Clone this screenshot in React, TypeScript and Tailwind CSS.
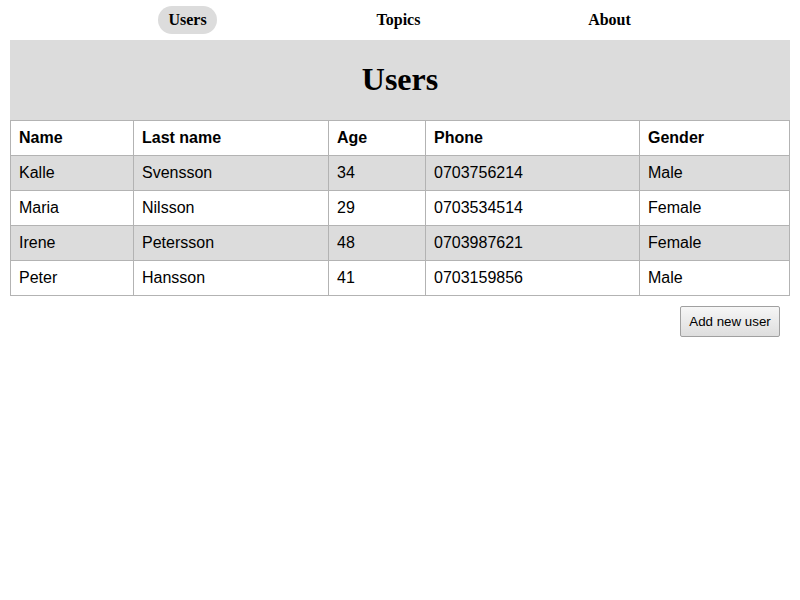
const users = [
  { name: "Kalle", lastName: "Svensson", age: 34, phone: "0703756214", gender: "Male" },
  { name: "Maria", lastName: "Nilsson", age: 29, phone: "0703534514", gender: "Female" },
  { name: "Irene", lastName: "Petersson", age: 48, phone: "0703987621", gender: "Female" },
  { name: "Peter", lastName: "Hansson", age: 41, phone: "0703159856", gender: "Male" },
];

const cell = "border border-[#b3b3b3] px-[8px] h-[35px] text-left align-middle";

export default function App() {
  return (
    <div className="w-[800px] min-h-[600px] bg-white text-black">
      <nav className="h-[40px] flex items-center justify-center pr-[3px] font-['Liberation_Serif',serif] font-bold text-[16px]">
        <div className="w-[211px] flex justify-center">
          <a className="px-[10px] h-[28px] flex items-center rounded-full bg-[#dcdcdc]">Users</a>
        </div>
        <div className="w-[211px] flex justify-center">
          <a className="px-[10px] h-[28px] flex items-center">Topics</a>
        </div>
        <div className="w-[211px] flex justify-center">
          <a className="px-[10px] h-[28px] flex items-center">About</a>
        </div>
      </nav>

      <div className="mx-[10px]">
        <div className="h-[80px] bg-[#dcdcdc] flex items-center justify-center pb-[2px]">
          <h1 className="font-['Liberation_Serif',serif] font-bold text-[32px]">Users</h1>
        </div>

        <table className="w-full border-collapse font-['Liberation_Sans',Arial,sans-serif] text-[16px]">
          <thead>
            <tr className="bg-white">
              <th className={`${cell} w-[123px] font-bold`}>Name</th>
              <th className={`${cell} w-[195px] font-bold`}>Last name</th>
              <th className={`${cell} w-[97px] font-bold`}>Age</th>
              <th className={`${cell} w-[214px] font-bold`}>Phone</th>
              <th className={`${cell} font-bold`}>Gender</th>
            </tr>
          </thead>
          <tbody>
            {users.map((u, i) => (
              <tr key={u.phone} className={i % 2 === 0 ? "bg-[#dcdcdc]" : "bg-white"}>
                <td className={cell}>{u.name}</td>
                <td className={cell}>{u.lastName}</td>
                <td className={cell}>{u.age}</td>
                <td className={cell}>{u.phone}</td>
                <td className={cell}>{u.gender}</td>
              </tr>
            ))}
          </tbody>
        </table>

        <div className="flex justify-end pr-[10px] pt-[10px]">
          <button className="w-[100px] h-[31px] border border-[#a0a0a0] rounded-[2px] bg-gradient-to-b from-[#f6f6f6] to-[#dedede] font-['Liberation_Sans',Arial,sans-serif] text-[13.33px]">
            Add new user
          </button>
        </div>
      </div>
    </div>
  );
}
